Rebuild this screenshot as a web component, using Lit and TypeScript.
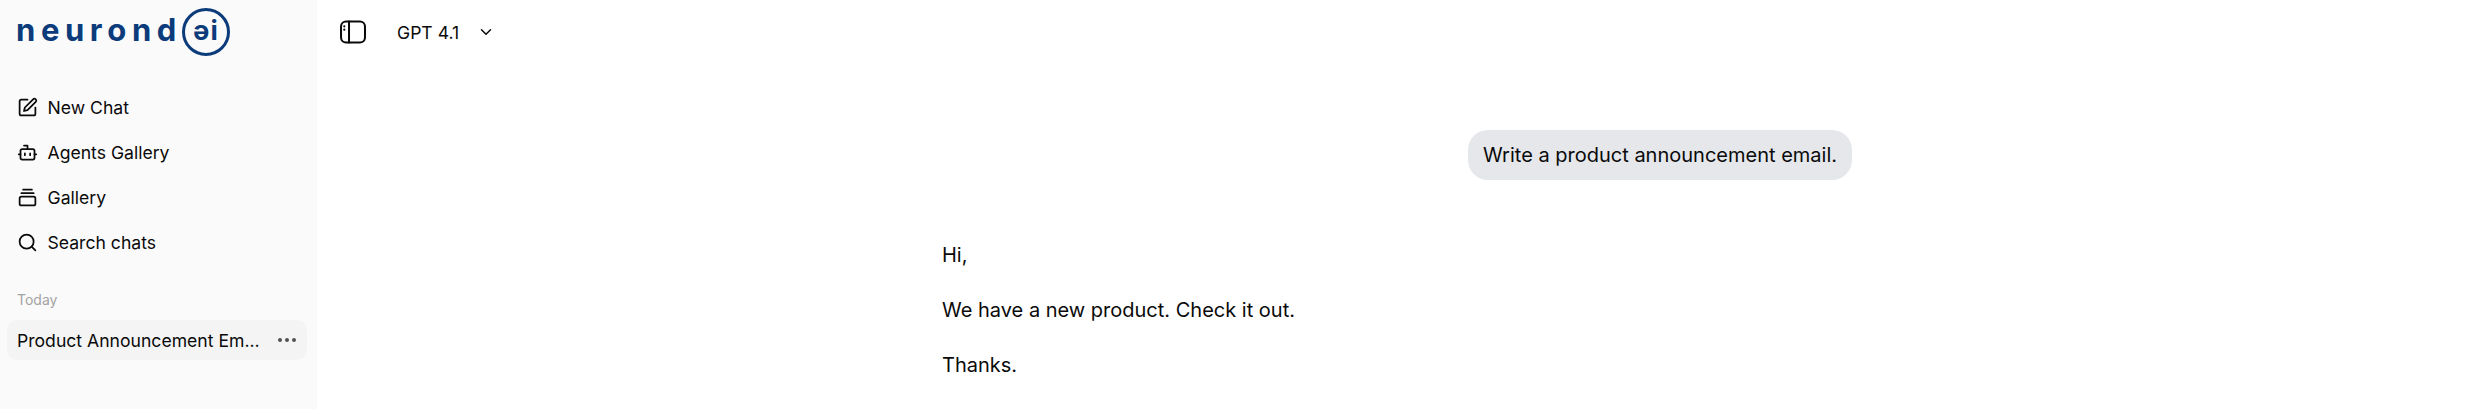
import { LitElement, css, html, svg } from "lit";
import { customElement } from "lit/decorators.js";

const icon = (body: unknown, size = 21) => html`<svg
  width=${size}
  height=${size}
  viewBox="0 0 24 24"
  fill="none"
  stroke="currentColor"
  stroke-width="2"
  stroke-linecap="round"
  stroke-linejoin="round"
>${body}</svg>`;

@customElement("app-root")
export class AppRoot extends LitElement {
  static styles = css`
    :host {
      display: block;
      height: 409px;
      font-family: Inter, "Liberation Sans", sans-serif;
      color: #0a0a0a;
      background: #fff;
      overflow: hidden;
    }
    .shell {
      display: flex;
      height: 100%;
    }
    .sidebar {
      width: 317px;
      flex: none;
      background: #fafafa;
      padding: 0 10px 0 7px;
      box-sizing: border-box;
    }
    .logo {
      display: flex;
      align-items: center;
      height: 64px;
      padding-left: 9px;
      color: #0b3b7a;
    }
    .word {
      font-size: 31px;
      font-weight: 700;
      letter-spacing: 5.6px;
      line-height: 1;
      margin-top: -6px;
      white-space: nowrap;
    }
    .mark {
      width: 48px;
      height: 48px;
      flex: none;
      box-sizing: border-box;
      border: 3.5px solid currentColor;
      border-radius: 50%;
      display: flex;
      align-items: center;
      justify-content: center;
      font-size: 27px;
      font-weight: 700;
      letter-spacing: 1px;
      line-height: 1;
      margin-left: 0;
      padding-bottom: 4px;
    }
    nav {
      margin-top: 21px;
    }
    .item {
      display: flex;
      align-items: center;
      gap: 10px;
      height: 45px;
      padding-left: 9.5px;
      font-size: 17.6px;
      line-height: 24px;
    }
    .item svg {
      flex: none;
    }
    .today {
      margin-top: 25px;
      padding-left: 10px;
      font-size: 14px;
      line-height: 20px;
      color: #a3a3a3;
    }
    .chat {
      display: flex;
      align-items: center;
      justify-content: space-between;
      height: 40px;
      margin-top: 10px;
      padding: 0 11px 0 10px;
      border-radius: 10px;
      background: #f4f4f5;
      font-size: 17.6px;
    }
    .dots {
      display: flex;
      gap: 3px;
    }
    .dots i {
      width: 4px;
      height: 4px;
      border-radius: 50%;
      background: #525252;
    }
    main {
      flex: 1;
      min-width: 0;
    }
    header {
      display: flex;
      align-items: center;
      height: 64px;
      padding-left: 22px;
      font-size: 17.6px;
    }
    .model {
      margin-left: 31px;
    }
    .chev {
      margin-left: 18px;
      display: flex;
    }
    .thread {
      width: 912px;
      margin: 66px auto 0;
      font-size: 20px;
      line-height: 28px;
    }
    .user {
      display: flex;
      justify-content: flex-end;
      padding-right: 2px;
    }
    .bubble {
      padding: 11px 15px;
      background: #e5e7eb;
      border-radius: 20px;
    }
    .reply {
      margin-top: 61px;
    }
    .reply p {
      margin: 0 0 27px;
    }
  `;

  render() {
    return html`<div class="shell">
      <aside class="sidebar">
        <div class="logo">
          <span class="word">neurond</span>
          <span class="mark">əi</span>
        </div>
        <nav>
          <div class="item">
            ${icon(svg`<path d="M12 3H5a2 2 0 0 0-2 2v14a2 2 0 0 0 2 2h14a2 2 0 0 0 2-2v-7" /><path d="M18.4 2.6a2.1 2.1 0 0 1 3 3L12 15l-4 1 1-4z" />`)}
            New Chat
          </div>
          <div class="item">
            ${icon(svg`<path d="M12 8V4H8" /><rect x="4" y="8" width="16" height="12" rx="2" /><path d="M2 14h2M20 14h2M15 13v2M9 13v2" />`)}
            Agents Gallery
          </div>
          <div class="item">
            ${icon(svg`<rect x="3" y="11" width="18" height="10" rx="2" /><path d="M5 7h14M7 3h10" />`)}
            Gallery
          </div>
          <div class="item">
            ${icon(svg`<circle cx="11" cy="11" r="8" /><path d="m21 21-4.3-4.3" />`)}
            Search chats
          </div>
        </nav>
        <div class="today">Today</div>
        <div class="chat">
          <span>Product Announcement Em...</span>
          <span class="dots"><i></i><i></i><i></i></span>
        </div>
      </aside>
      <main>
        <header>
          ${icon(svg`<rect x="1.8" y="2.2" width="21.3" height="18.7" rx="4.5" stroke-width="1.8" /><path d="M8.9 2.2v18.7" stroke-width="1.8" /><path d="M4.7 6.5h.01M4.7 9.5h.01" />`, 27)}
          <span class="model">GPT 4.1</span>
          <span class="chev">${icon(svg`<path d="m6 9 6 6 6-6" />`, 18)}</span>
        </header>
        <div class="thread">
          <div class="user"><div class="bubble">Write a product announcement email.</div></div>
          <div class="reply">
            <p>Hi,</p>
            <p>We have a new product. Check it out.</p>
            <p>Thanks.</p>
          </div>
        </div>
      </main>
    </div>`;
  }
}
